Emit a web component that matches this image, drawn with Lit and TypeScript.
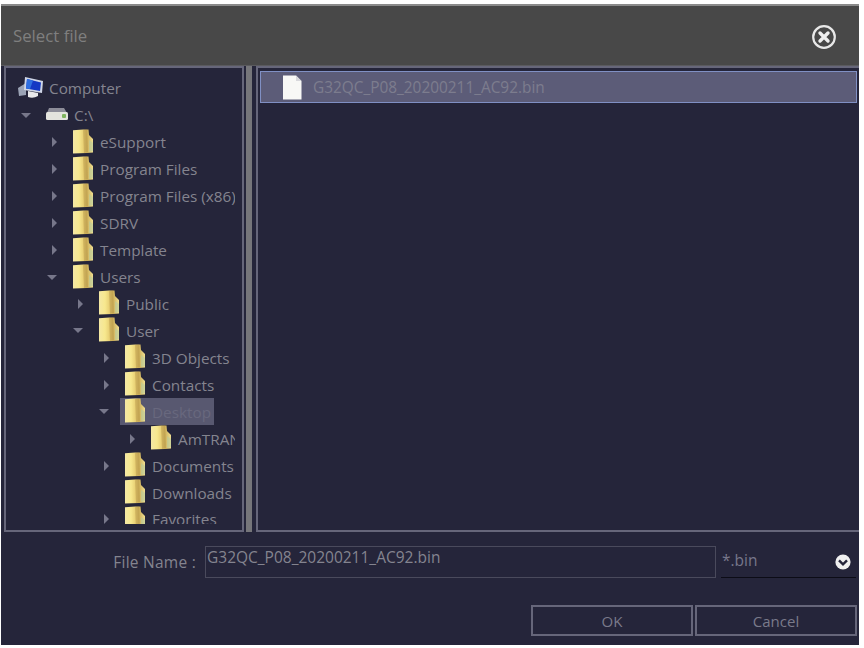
import { LitElement, html, css, svg } from "lit";
import { customElement } from "lit/decorators.js";

type Node = { label: string; depth: number; arrow?: "open" | "closed"; kind?: "pc" | "drive" | "folder"; selected?: boolean };

const TREE: Node[] = [
  { label: "Computer", depth: 0, kind: "pc" },
  { label: "C:\\", depth: 1, arrow: "open", kind: "drive" },
  { label: "eSupport", depth: 2, arrow: "closed" },
  { label: "Program Files", depth: 2, arrow: "closed" },
  { label: "Program Files (x86)", depth: 2, arrow: "closed" },
  { label: "SDRV", depth: 2, arrow: "closed" },
  { label: "Template", depth: 2, arrow: "closed" },
  { label: "Users", depth: 2, arrow: "open" },
  { label: "Public", depth: 3, arrow: "closed" },
  { label: "User", depth: 3, arrow: "open" },
  { label: "3D Objects", depth: 4, arrow: "closed" },
  { label: "Contacts", depth: 4, arrow: "closed" },
  { label: "Desktop", depth: 4, arrow: "open", selected: true },
  { label: "AmTRAN", depth: 5, arrow: "closed" },
  { label: "Documents", depth: 4, arrow: "closed" },
  { label: "Downloads", depth: 4 },
  { label: "Favorites", depth: 4, arrow: "closed" },
];

const folderIcon = svg`<svg class="ico" width="20" height="25" viewBox="0 0 20 25">
  <defs><linearGradient id="fg" x1="0" x2="1" y1="0" y2="0">
    <stop offset="0" stop-color="#f4e8a4"/><stop offset="0.3" stop-color="#f7e88e"/><stop offset="0.55" stop-color="#e6cc70"/><stop offset="0.7" stop-color="#cdaf58"/><stop offset="1" stop-color="#f0df92"/>
  </linearGradient></defs>
  <path d="M0 1.2 L10 0.5 L15.5 0.5 L16 6 L20 10 L20 23.5 L14 24 L0 24.5 Z" fill="url(#fg)"/>
  <path d="M10 1.2 L14 0.5 L15 23 L11 24 Z" fill="#b4954a" opacity="0.45"/>
  <path d="M16 11 L20 14 L20 22 L16 23 Z" fill="#b4ccA0" opacity="0.55"/>
</svg>`;

const driveIcon = svg`<svg class="ico" width="24" height="14" viewBox="0 0 24 14">
  <path d="M4 1 L19 1 L22 6 L2 6 Z" fill="#8d8d99"/>
  <rect x="1" y="5" width="22" height="8" rx="1.5" fill="#e4e4de"/>
  <rect x="17" y="7" width="4" height="4" rx="1" fill="#7fb45f"/>
</svg>`;

const pcIcon = svg`<svg class="ico" width="25" height="23" viewBox="0 0 25 23">
  <path d="M0 12 L8 7 L8 19 L1 20 Z" fill="#9ba3b5"/>
  <path d="M7 1 L25 5 L24 17 L6 14 Z" fill="#cfd6e6"/>
  <path d="M9 3 L23 6.5 L22 15 L8 12.5 Z" fill="#1438c4"/>
  <path d="M9 3 L15 4.4 L12 13 L8 12.5 Z" fill="#2f6fe0"/>
  <path d="M10 15 L20 17 L20 20 Q15 23 10 21 Z" fill="#e8e8ea"/>
</svg>`;

const closeIcon = svg`<svg width="26" height="26" viewBox="0 0 26 26">
  <circle cx="13" cy="13" r="10.8" fill="none" stroke="#e8e8e8" stroke-width="2.2"/>
  <path d="M9 9 L17 17 M17 9 L9 17" stroke="#eeeeee" stroke-width="3.4" stroke-linecap="round"/>
</svg>`;

const chevIcon = svg`<svg width="16" height="16" viewBox="0 0 16 16">
  <circle cx="8" cy="8" r="7.6" fill="#f0f0f0"/>
  <path d="M4 6.3 L8 10.3 L12 6.3" fill="none" stroke="#25253a" stroke-width="2.4"/>
</svg>`;

const fileIcon = svg`<svg width="20" height="25" viewBox="0 0 20 25">
  <path d="M1 0.5 L14 0.5 L19.5 6 L19.5 24.5 L1 24.5 Z" fill="#f8f8f6"/>
  <path d="M14 0.5 L14 6 L19.5 6 Z" fill="#d8d8dc"/>
</svg>`;

@customElement("app-root")
export class AppRoot extends LitElement {
  static styles = css`
    :host { display: block; width: 864px; height: 648px; background: #fff; overflow: hidden; font-family: "Open Sans", "Noto Sans", sans-serif; }
    .dialog { width: 858px; height: 641px; margin: 4px 0 0 1px; box-sizing: border-box; background: #25253a; display: flex; flex-direction: column; border-top: 2px solid #8a8a8a; }
    .title { height: 59px; flex: none; background: #484848; display: flex; align-items: center; justify-content: space-between; padding: 0 22px 0 12px; color: #7f7f7f; font-size: 16.8px; border-bottom: 1px solid #5a5a5e; }
    .close { display: flex; margin-top: 3px; }
    .panes { display: flex; height: 466px; flex: none; padding-left: 3px; }
    .tree { width: 240px; box-sizing: border-box; border: 2px solid #66667a; flex: none; padding: 7px 0 6px 0; }
    .clip { height: 100%; width: 229px; overflow: hidden; }
    .row { height: 26.94px; display: flex; align-items: center; white-space: nowrap; color: #84848f; font-size: 15.3px; }
    .slot { width: 20px; flex: none; display: flex; justify-content: center; }
    .arrow { width: 0; height: 0; flex: none; }
    .arrow.closed { border-left: 5px solid #77778a; border-top: 5px solid transparent; border-bottom: 5px solid transparent; }
    .arrow.open { border-top: 5px solid #77778a; border-left: 5px solid transparent; border-right: 5px solid transparent; transform: translateX(-2px); }
    .item { display: flex; align-items: center; height: 27px; margin-left: 9px; }
    .item.top { margin-left: 0; }
    .item.top .iconbox { width: 30px; }
    .item.drive .iconbox { margin-left: -2px; width: 28px; }
    .item.sel { background: #585870; color: #68687e; margin-left: 4px; padding: 0 2px 0 5px; }
    .iconbox { width: 26px; flex: none; display: flex; align-items: center; padding-bottom: 2px; box-sizing: border-box; height: 27px; }
    .label { padding: 0 1px; }
    .ico { display: block; }
    .splitter { width: 6px; flex: none; margin: 0 4px 0 2px; background: #76767a; }
    .list { flex: 1; box-sizing: border-box; border: 2px solid #66667a; border-right: none; padding: 3px 2px; }
    .file { height: 32px; box-sizing: border-box; background: #5c5c78; border: 1px solid #8090c4; display: flex; align-items: center; padding-left: 21px; color: #7c7c8e; font-size: 15.4px; gap: 11px; }
    .file svg { display: block; }
    .bottom { flex: 1; display: flex; flex-direction: column; padding: 14px 2px 0 0; }
    .nameRow { display: flex; align-items: flex-start; height: 32px; }
    .nameLabel { width: 195px; text-align: right; color: #84848f; font-size: 15.5px; line-height: 32px; margin-right: 9px; flex: none; letter-spacing: 0.25px; }
    .input { width: 511px; height: 32px; flex: none; box-sizing: border-box; border: 1px solid #4a4a5c; padding-left: 1px; color: #84848f; font-size: 15.5px; line-height: 20px; }
    .select { width: 135px; height: 32px; margin-left: 5px; box-sizing: border-box; border-bottom: 1px solid #0c0c16; display: flex; align-items: center; justify-content: space-between; padding: 0 5px 4px 1px; color: #77778a; font-size: 15.5px; }
    .select svg { margin-top: 4px; }
    .buttons { display: flex; justify-content: flex-end; gap: 2px; margin-top: 27px; }
    .btn { width: 162px; height: 31px; box-sizing: border-box; border: 2px solid #66667a; display: flex; align-items: center; justify-content: center; color: #7a7a8a; font-size: 15px; }
  `;

  private renderRow(n: Node) {
    const icon = n.kind === "pc" ? pcIcon : n.kind === "drive" ? driveIcon : folderIcon;
    const inner = html`<span class="iconbox">${icon}</span><span class="label">${n.label}</span>`;
    const cls = n.selected ? "item sel" : n.depth === 0 ? "item top" : n.kind === "drive" ? "item drive" : "item";
    const left = n.depth === 0 ? 12 : 26 * n.depth - 14;
    return html`<div class="row" style="padding-left:${left}px">
      ${n.depth === 0 ? "" : html`<span class="slot">${n.arrow ? html`<span class="arrow ${n.arrow}"></span>` : ""}</span>`}
      <span class=${cls}>${inner}</span>
    </div>`;
  }

  render() {
    return html`<div class="dialog">
      <div class="title"><span>Select file</span><span class="close">${closeIcon}</span></div>
      <div class="panes">
        <div class="tree"><div class="clip">${TREE.map((n) => this.renderRow(n))}</div></div>
        <div class="splitter"></div>
        <div class="list"><div class="file">${fileIcon}<span>G32QC_P08_20200211_AC92.bin</span></div></div>
      </div>
      <div class="bottom">
        <div class="nameRow">
          <span class="nameLabel">File Name :</span>
          <div class="input">G32QC_P08_20200211_AC92.bin</div>
          <div class="select"><span>*.bin</span>${chevIcon}</div>
        </div>
        <div class="buttons"><div class="btn">OK</div><div class="btn">Cancel</div></div>
      </div>
    </div>`;
  }
}
